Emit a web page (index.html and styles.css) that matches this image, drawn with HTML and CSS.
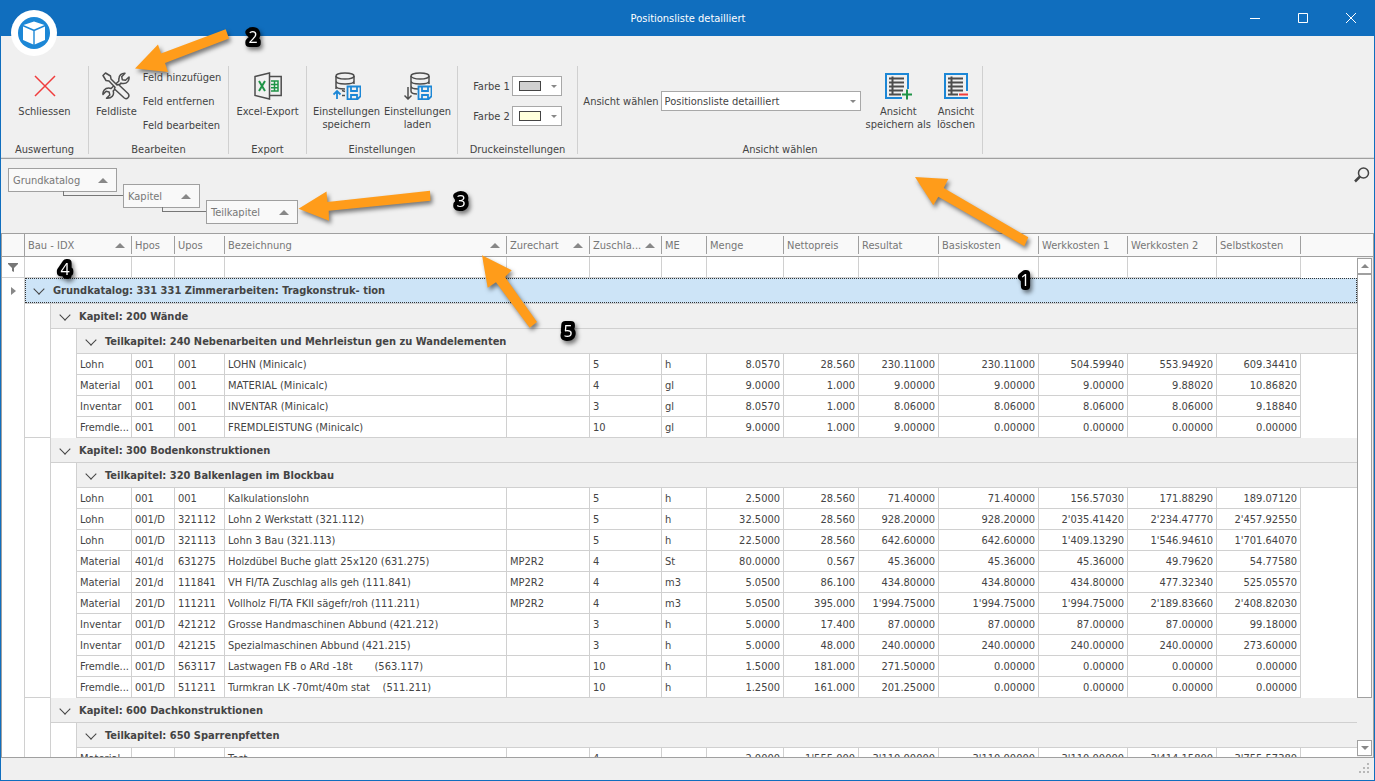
FILE: index.html
```html
<!DOCTYPE html>
<html lang="de">
<head>
    <meta charset="UTF-8">
    <meta name="viewport" content="width=device-width, initial-scale=1.0">
    <title>Positionsliste detailliert</title>
    <link rel="stylesheet" href="styles.css">
</head>
<body>
    <div class="window">
        <header class="titlebar">
            <svg class="app-logo" viewBox="0 0 46 46">
                <circle cx="23" cy="23" r="23" fill="#fff"/>
                <circle cx="23" cy="23" r="16" fill="#1c87d6"/>
                <path d="M23 11.5 33.5 15 23 19.500 12.500 15zM12 16.500 22.300 21v13.500L12 30zM34 16.500 23.700 21v13.500L34 30z" fill="#fff"/>
            </svg>
            <h1 class="title">Positionsliste detailliert</h1>
            <div class="window-buttons">
                <button aria-label="Minimieren"><svg width="12" height="12"><path d="M1 6.500h10"/></svg></button>
                <button aria-label="Maximieren"><svg width="12" height="12"><path d="M1.500 1.500h9v9h-9z"/></svg></button>
                <button aria-label="Fenster schliessen"><svg width="12" height="12"><path d="M1 1l10 10M11 1 1 11"/></svg></button>
            </div>
        </header>

        <div class="ribbon">
            <section class="group group-auswertung">
                <div class="tools">
                    <button class="tool">
                        <svg width="28" height="28"><path d="M4 4l20 20M24 4 4 24" stroke="#f03c3c" stroke-width="1.500"/></svg>
                        Schliessen
                    </button>
                </div>
                <div class="caption">Auswertung</div>
            </section>
            <div class="sep"></div>
            <section class="group group-bearbeiten">
                <div class="tools">
                    <button class="tool">
                        <svg width="28" height="28" stroke="#4d4d4d" stroke-width="1.500" stroke-linejoin="round">
                            <path d="M17 6.500c0-3 2.500-5.500 6-5.300l-3.300 3.500.6 3 3.200.6L27 5c.6 3.500-2 6.600-5.500 6.600-1 0-1.800-.1-2.500-.5L11.200 19c1.300 4-1.400 7.700-6.700 7.300l3.300-3.400-.7-3-3-.6L1 22.500c-.5-3.500 2-6.500 5.600-6.500 1 0 1.800.2 2.500.5L16.900 9c-.2-.8-.1-1.600.1-2.500z" fill="#f0f0f0"/>
                            <path d="M1 3.500 3.500 1l5 3 .5 3 6 6 1.500-.5 9.500 9c2.500 3-1.200 6.700-4 4.300L12.500 17l.5-1.800-6-6.200-3-.5z" fill="#f0f0f0"/>
                        </svg>
                        Feldliste
                    </button>
                    <div class="tool-list">
                        <button>Feld hinzufügen</button>
                        <button>Feld entfernen</button>
                        <button>Feld bearbeiten</button>
                    </div>
                </div>
                <div class="caption">Bearbeiten</div>
            </section>
            <div class="sep"></div>
            <section class="group group-export">
                <div class="tools">
                    <button class="tool">
                        <svg width="28" height="28" stroke="#4d4d4d" stroke-width="1.500">
                            <path d="M1 4.500 15.500 1v26L1 23.500z"/>
                            <path d="M15.500 4.500h11.700v19H15.500"/>
                            <path d="M5 9l6 10M11 9 5 19" stroke="#1f9447" stroke-width="2"/>
                            <path d="M17 9h7v10h-7M17 12.500h7M17 15.700h7M20.500 9v10" stroke="#1f9447"/>
                        </svg>
                        Excel-Export
                    </button>
                </div>
                <div class="caption">Export</div>
            </section>
            <div class="sep"></div>
            <section class="group group-einstellungen">
                <div class="tools">
                    <button class="tool">
                        <svg width="28" height="28" stroke="#4d4d4d" stroke-width="1.500">
                            <ellipse cx="12" cy="4" rx="9" ry="3"/>
                            <path d="M3 4v5c0 4 18 4 18 0V4M3 9v5c0 2 4 3 9 3M21 9v3M3 14v3M9 18.500l3 1M9 23.500h3"/>
                            <path d="M14.500 14.500h13v9.700l-3 3h-10zM18 14.500v4.500h6v-4.500M18 27v-4h6v4M4 27v-8M.5 22.500 4 19l3.500 3.500" stroke="#1c87d6" stroke-width="1.800"/>
                        </svg>
                        Einstellungen<br>speichern
                    </button>
                    <button class="tool">
                        <svg width="28" height="28" stroke="#4d4d4d" stroke-width="1.500">
                            <ellipse cx="16" cy="4" rx="9" ry="3"/>
                            <path d="M7 4v5c0 4 18 4 18 0V4M7 9v5c0 2 3 3 7 3M25 9v3M7 14v5c0 2 3 3 6 3"/>
                            <path d="M4 15v12M.5 23.500 4 27l3.500-3.500"/>
                            <path d="M14.500 14.500h13v9.700l-3 3h-10zM18 14.500v4.500h6v-4.500M18 27v-4h6v4" stroke="#1c87d6" stroke-width="1.800"/>
                        </svg>
                        Einstellungen<br>laden
                    </button>
                </div>
                <div class="caption">Einstellungen</div>
            </section>
            <div class="sep"></div>
            <section class="group group-druck">
                <div class="fields">
                    <div class="field">
                        <label for="farbe1">Farbe 1</label>
                        <div class="color-field">
                            <select id="farbe1"><option value="grau"></option></select>
                            <span class="swatch swatch-grey"></span>
                        </div>
                    </div>
                    <div class="field">
                        <label for="farbe2">Farbe 2</label>
                        <div class="color-field">
                            <select id="farbe2"><option value="gelb"></option></select>
                            <span class="swatch swatch-yellow"></span>
                        </div>
                    </div>
                </div>
                <div class="caption">Druckeinstellungen</div>
            </section>
            <div class="sep"></div>
            <section class="group group-ansicht">
                <div class="tools">
                    <div class="field">
                        <label for="ansicht">Ansicht wählen</label>
                        <select id="ansicht" class="view-select"><option>Positionsliste detailliert</option></select>
                    </div>
                    <button class="tool tool-save">
                        <svg width="28" height="28" stroke-width="1.500">
                            <path d="M24 17V2H2v24h16" stroke="#1c87d6" stroke-width="2"/>
                            <path d="M5 6.500h15M5 10.500h15M5 14.500h15M5 18.500h14M5 22.500h12M8.500 4.500v19" stroke="#4d4d4d" stroke-width="2"/>
                            <path d="M18 22.500h10M23 17.500v10" stroke="#1f9447" stroke-width="2"/>
                        </svg>
                        Ansicht<br>speichern als
                    </button>
                    <button class="tool">
                        <svg width="28" height="28">
                            <path d="M25 19V2H3v24h22v-1" stroke="#1c87d6" stroke-width="2"/>
                            <path d="M6 6.500h15M6 10.500h15M6 14.500h15M6 18.500h15M6 22.500h10M9.500 4.500v19" stroke="#4d4d4d" stroke-width="2"/>
                            <path d="M17 22.500h9" stroke="#f03c3c" stroke-width="2"/>
                        </svg>
                        Ansicht<br>löschen
                    </button>
                </div>
                <div class="caption">Ansicht wählen</div>
            </section>
            <div class="sep"></div>
        </div>

        <div class="group-panel">
            <button class="group-box box-grundkatalog">Grundkatalog<i class="sort"></i></button>
            <button class="group-box box-kapitel">Kapitel<i class="sort"></i></button>
            <button class="group-box box-teilkapitel">Teilkapitel<i class="sort"></i></button>
            <button class="search" aria-label="Suchen">
                <svg width="16" height="16"><circle cx="9.500" cy="6" r="5"/><path d="M6 9.500 1 14.500" stroke-width="2.500"/></svg>
            </button>
        </div>

        <main class="grid">
            <div class="grid-view">
                <table class="positions">
                    <colgroup>
                        <col class="w-marker"><col class="w-indent"><col class="w-indent"><col class="w-bau">
                        <col class="w-hpos"><col class="w-upos"><col class="w-text"><col class="w-zurechart">
                        <col class="w-zuschlag"><col class="w-me"><col class="w-menge"><col class="w-netto">
                        <col class="w-resultat"><col class="w-basis"><col class="w-werk"><col class="w-werk">
                        <col class="w-selbst"><col>
                    </colgroup>
                    <thead>
                        <tr>
                            <th class="first"></th>
                            <th colspan="3"><div>Bau - IDX<i class="sort"></i></div></th>
                            <th>Hpos</th>
                            <th>Upos</th>
                            <th><div>Bezeichnung<i class="sort"></i></div></th>
                            <th><div>Zurechart<i class="sort"></i></div></th>
                            <th><div>Zuschla...<i class="sort"></i></div></th>
                            <th>ME</th>
                            <th>Menge</th>
                            <th>Nettopreis</th>
                            <th>Resultat</th>
                            <th>Basiskosten</th>
                            <th>Werkkosten 1</th>
                            <th>Werkkosten 2</th>
                            <th>Selbstkosten</th>
                            <th class="rest"></th>
                        </tr>
                    </thead>
                    <tbody>
                        <tr class="filter">
                            <td class="marker"><svg width="10" height="9"><path d="M0 0h10v1L6 5v4L4 8V5L0 1z" fill="#777"/></svg></td>
                            <td colspan="3"><input aria-label="Filter Bau - IDX"></td>
                            <td><input aria-label="Filter Hpos"></td>
                            <td><input aria-label="Filter Upos"></td>
                            <td><input aria-label="Filter Bezeichnung"></td>
                            <td><input aria-label="Filter Zurechart"></td>
                            <td><input aria-label="Filter Zuschlag"></td>
                            <td><input aria-label="Filter ME"></td>
                            <td><input aria-label="Filter Menge"></td>
                            <td><input aria-label="Filter Nettopreis"></td>
                            <td><input aria-label="Filter Resultat"></td>
                            <td><input aria-label="Filter Basiskosten"></td>
                            <td><input aria-label="Filter Werkkosten 1"></td>
                            <td><input aria-label="Filter Werkkosten 2"></td>
                            <td><input aria-label="Filter Selbstkosten"></td>
                            <td class="rest"></td>
                        </tr>
                        <tr class="focused">
                            <td class="marker"><svg width="5" height="8"><path d="M0 0l5 4-5 4z" fill="#888"/></svg></td>
                            <td class="heading" colspan="17"><div><button class="toggle" aria-label="Zuklappen"></button>Grundkatalog: 331 331 Zimmerarbeiten: Tragkonstruk- tion</div></td>
                        </tr>
                        <tr>
                            <td class="marker"></td><td class="indent"></td>
                            <td class="heading" colspan="16"><div><button class="toggle" aria-label="Zuklappen"></button>Kapitel: 200 Wände</div></td>
                        </tr>
                        <tr>
                            <td class="marker"></td><td class="indent"></td><td class="indent"></td>
                            <td class="heading" colspan="15"><div><button class="toggle" aria-label="Zuklappen"></button>Teilkapitel: 240 Nebenarbeiten und Mehrleistun gen zu Wandelementen</div></td>
                        </tr>
                        <tr class="item"><td class="marker"></td><td class="indent"></td><td class="indent"></td><td>Lohn</td><td>001</td><td>001</td><td>LOHN (Minicalc)</td><td></td><td>5</td><td>h</td><td class="num">8.0570</td><td class="num">28.560</td><td class="num">230.11000</td><td class="num">230.11000</td><td class="num">504.59940</td><td class="num">553.94920</td><td class="num">609.34410</td><td class="rest"></td></tr>
                        <tr class="item"><td class="marker"></td><td class="indent"></td><td class="indent"></td><td>Material</td><td>001</td><td>001</td><td>MATERIAL (Minicalc)</td><td></td><td>4</td><td>gl</td><td class="num">9.0000</td><td class="num">1.000</td><td class="num">9.00000</td><td class="num">9.00000</td><td class="num">9.00000</td><td class="num">9.88020</td><td class="num">10.86820</td><td class="rest"></td></tr>
                        <tr class="item"><td class="marker"></td><td class="indent"></td><td class="indent"></td><td>Inventar</td><td>001</td><td>001</td><td>INVENTAR (Minicalc)</td><td></td><td>3</td><td>gl</td><td class="num">8.0570</td><td class="num">1.000</td><td class="num">8.06000</td><td class="num">8.06000</td><td class="num">8.06000</td><td class="num">8.06000</td><td class="num">9.18840</td><td class="rest"></td></tr>
                        <tr class="item last"><td class="marker"></td><td class="indent"></td><td class="indent"></td><td>Fremdle...</td><td>001</td><td>001</td><td>FREMDLEISTUNG (Minicalc)</td><td></td><td>10</td><td>gl</td><td class="num">9.0000</td><td class="num">1.000</td><td class="num">9.00000</td><td class="num">0.00000</td><td class="num">0.00000</td><td class="num">0.00000</td><td class="num">0.00000</td><td class="rest"></td></tr>
                        <tr>
                            <td class="marker"></td><td class="indent"></td>
                            <td class="heading" colspan="16"><div><button class="toggle" aria-label="Zuklappen"></button>Kapitel: 300 Bodenkonstruktionen</div></td>
                        </tr>
                        <tr>
                            <td class="marker"></td><td class="indent"></td><td class="indent"></td>
                            <td class="heading" colspan="15"><div><button class="toggle" aria-label="Zuklappen"></button>Teilkapitel: 320 Balkenlagen im Blockbau</div></td>
                        </tr>
                        <tr class="item"><td class="marker"></td><td class="indent"></td><td class="indent"></td><td>Lohn</td><td>001</td><td>001</td><td>Kalkulationslohn</td><td></td><td>5</td><td>h</td><td class="num">2.5000</td><td class="num">28.560</td><td class="num">71.40000</td><td class="num">71.40000</td><td class="num">156.57030</td><td class="num">171.88290</td><td class="num">189.07120</td><td class="rest"></td></tr>
                        <tr class="item"><td class="marker"></td><td class="indent"></td><td class="indent"></td><td>Lohn</td><td>001/D</td><td>321112</td><td>Lohn 2 Werkstatt (321.112)</td><td></td><td>5</td><td>h</td><td class="num">32.5000</td><td class="num">28.560</td><td class="num">928.20000</td><td class="num">928.20000</td><td class="num">2'035.41420</td><td class="num">2'234.47770</td><td class="num">2'457.92550</td><td class="rest"></td></tr>
                        <tr class="item"><td class="marker"></td><td class="indent"></td><td class="indent"></td><td>Lohn</td><td>001/D</td><td>321113</td><td>Lohn 3 Bau (321.113)</td><td></td><td>5</td><td>h</td><td class="num">22.5000</td><td class="num">28.560</td><td class="num">642.60000</td><td class="num">642.60000</td><td class="num">1'409.13290</td><td class="num">1'546.94610</td><td class="num">1'701.64070</td><td class="rest"></td></tr>
                        <tr class="item"><td class="marker"></td><td class="indent"></td><td class="indent"></td><td>Material</td><td>401/d</td><td>631275</td><td>Holzdübel Buche glatt 25x120 (631.275)</td><td>MP2R2</td><td>4</td><td>St</td><td class="num">80.0000</td><td class="num">0.567</td><td class="num">45.36000</td><td class="num">45.36000</td><td class="num">45.36000</td><td class="num">49.79620</td><td class="num">54.77580</td><td class="rest"></td></tr>
                        <tr class="item"><td class="marker"></td><td class="indent"></td><td class="indent"></td><td>Material</td><td>201/d</td><td>111841</td><td>VH FI/TA Zuschlag alls geh (111.841)</td><td>MP2R2</td><td>4</td><td>m3</td><td class="num">5.0500</td><td class="num">86.100</td><td class="num">434.80000</td><td class="num">434.80000</td><td class="num">434.80000</td><td class="num">477.32340</td><td class="num">525.05570</td><td class="rest"></td></tr>
                        <tr class="item"><td class="marker"></td><td class="indent"></td><td class="indent"></td><td>Material</td><td>201/D</td><td>111211</td><td>Vollholz FI/TA FKII sägefr/roh (111.211)</td><td>MP2R2</td><td>4</td><td>m3</td><td class="num">5.0500</td><td class="num">395.000</td><td class="num">1'994.75000</td><td class="num">1'994.75000</td><td class="num">1'994.75000</td><td class="num">2'189.83660</td><td class="num">2'408.82030</td><td class="rest"></td></tr>
                        <tr class="item"><td class="marker"></td><td class="indent"></td><td class="indent"></td><td>Inventar</td><td>001/D</td><td>421212</td><td>Grosse Handmaschinen Abbund (421.212)</td><td></td><td>3</td><td>h</td><td class="num">5.0000</td><td class="num">17.400</td><td class="num">87.00000</td><td class="num">87.00000</td><td class="num">87.00000</td><td class="num">87.00000</td><td class="num">99.18000</td><td class="rest"></td></tr>
                        <tr class="item"><td class="marker"></td><td class="indent"></td><td class="indent"></td><td>Inventar</td><td>001/D</td><td>421215</td><td>Spezialmaschinen Abbund (421.215)</td><td></td><td>3</td><td>h</td><td class="num">5.0000</td><td class="num">48.000</td><td class="num">240.00000</td><td class="num">240.00000</td><td class="num">240.00000</td><td class="num">240.00000</td><td class="num">273.60000</td><td class="rest"></td></tr>
                        <tr class="item"><td class="marker"></td><td class="indent"></td><td class="indent"></td><td>Fremdle...</td><td>001/D</td><td>563117</td><td>Lastwagen FB o ARd -18t       (563.117)</td><td></td><td>10</td><td>h</td><td class="num">1.5000</td><td class="num">181.000</td><td class="num">271.50000</td><td class="num">0.00000</td><td class="num">0.00000</td><td class="num">0.00000</td><td class="num">0.00000</td><td class="rest"></td></tr>
                        <tr class="item last"><td class="marker"></td><td class="indent"></td><td class="indent"></td><td>Fremdle...</td><td>001/D</td><td>511211</td><td>Turmkran LK -70mt/40m stat    (511.211)</td><td></td><td>10</td><td>h</td><td class="num">1.2500</td><td class="num">161.000</td><td class="num">201.25000</td><td class="num">0.00000</td><td class="num">0.00000</td><td class="num">0.00000</td><td class="num">0.00000</td><td class="rest"></td></tr>
                        <tr>
                            <td class="marker"></td><td class="indent"></td>
                            <td class="heading" colspan="16"><div><button class="toggle" aria-label="Zuklappen"></button>Kapitel: 600 Dachkonstruktionen</div></td>
                        </tr>
                        <tr>
                            <td class="marker"></td><td class="indent"></td><td class="indent"></td>
                            <td class="heading" colspan="15"><div><button class="toggle" aria-label="Zuklappen"></button>Teilkapitel: 650 Sparrenpfetten</div></td>
                        </tr>
                        <tr class="item"><td class="marker"></td><td class="indent"></td><td class="indent"></td><td>Material</td><td></td><td></td><td>Test</td><td></td><td>4</td><td></td><td class="num">2.0000</td><td class="num">1'555.000</td><td class="num">3'110.00000</td><td class="num">3'110.00000</td><td class="num">3'110.00000</td><td class="num">3'414.15800</td><td class="num">3'755.57380</td><td class="rest"></td></tr>
                    </tbody>
                </table>
            </div>
            <div class="scrollbar">
                <div class="scroll-corner"></div>
                <button class="scroll-button" aria-label="Nach oben"><i class="arrow-up"></i></button>
                <div class="thumb"></div>
                <div class="track"></div>
                <button class="scroll-button" aria-label="Nach unten"><i class="arrow-down"></i></button>
            </div>
        </main>

        <footer class="statusbar">
            <svg width="12" height="12"><path d="M9 0h2v2H9zM5 4h2v2H5zM9 4h2v2H9zM1 8h2v2H1zM5 8h2v2H5zM9 8h2v2H9z" fill="#b8b8b8"/></svg>
        </footer>

        <!-- numbered callouts -->
        <svg class="callouts" width="1375" height="781">
            <g class="arrows">
                <path d="M135 68.500 158 44.500 161 53.500 225.700 29.300 229 38.500 165 63 168 72z"/>
                <path d="M298.500 208.700 326.500 191.500 327.500 202 430 190.700 430.500 200.700 328.700 210.700 329 220.700z"/>
                <path d="M482 255.300 511.700 270.300 505 277 537 322 529.700 327.700 496 282.300 487.700 287.700z"/>
                <path d="M915 177 948.300 179 943.700 188 1028.300 237.300 1024.300 246.300 938.300 196.700 933.300 205.300z"/>
            </g>
            <g class="numbers">
                <text x="1025" y="286">1</text>
                <text x="253" y="43">2</text>
                <text x="461" y="207">3</text>
                <text x="65" y="275">4</text>
                <text x="568" y="337">5</text>
            </g>
        </svg>
    </div>
</body>
</html>
```
FILE: styles.css
```css
* {
    box-sizing: border-box;
}
body {
    margin: 0;
    font-family: "DejaVu Sans Condensed", "Noto Sans", sans-serif;
    font-size: 11px;
    line-height: 13px;
    color: #444;
}
button, input, select {
    font: inherit;
    color: inherit;
    margin: 0;
    padding: 0;
    border: none;
    border-radius: 0;
    background: none;
}
svg {
    display: block;
    fill: none;
}
.window {
    position: relative;
    display: flex;
    flex-direction: column;
    height: 100vh;
    overflow: hidden;
    background: #f0f0f0;
    border: 1px solid #106ebe;
    border-top: none;
}

/* title bar */
.titlebar {
    display: grid;
    grid-template-columns: 1fr auto 1fr;
    align-items: center;
    height: 36px;
    flex: none;
    margin-right: -1px;
    background: #106ebe;
    color: #fff;
}
.app-logo {
    position: absolute;
    left: 10px;
    top: 10px;
    width: 46px;
    height: 46px;
}
.title {
    grid-column: 2;
    margin: 0;
    font-size: 11px;
    font-weight: 400;
}
.window-buttons {
    display: flex;
    justify-content: flex-end;
}
.window-buttons button {
    display: flex;
    align-items: center;
    justify-content: center;
    width: 48px;
    height: 36px;
}
.window-buttons svg {
    stroke: #fff;
}

/* ribbon */
.ribbon {
    display: flex;
    flex: none;
    height: 123px;
    padding-top: 30px;
    border-bottom: 1px solid #a0a0a0;
    box-shadow: inset 0 -1px #dcdcdc;
}
.sep {
    flex: none;
    width: 1px;
    height: 88px;
    background: #d0d0d0;
}
.group {
    display: flex;
    flex-direction: column;
    flex: none;
    height: 90px;
}
.group-auswertung { width: 87px; }
.group-bearbeiten { width: 139px; }
.group-export { width: 77px; }
.group-einstellungen { width: 150px; }
.group-druck { width: 119px; }
.group-ansicht { width: 404px; }
.tools {
    display: flex;
    flex: 1;
    justify-content: center;
}
.group-bearbeiten .tools {
    justify-content: flex-start;
    padding-left: 4px;
}
.group-ansicht .tools {
    justify-content: flex-end;
    padding-right: 4px;
}
.caption {
    text-align: center;
}
.tool {
    display: flex;
    flex-direction: column;
    align-items: center;
    justify-content: flex-start;
    padding: 6px 3px 0;
    text-align: center;
    white-space: nowrap;
}
.tool svg {
    margin-bottom: 5px;
}
.group-einstellungen .tool {
    width: 71px;
    padding-left: 0;
    padding-right: 0;
}
.tool-list {
    display: flex;
    flex-direction: column;
    align-items: flex-start;
    padding-left: 3px;
}
.tool-list button {
    height: 24px;
    padding-bottom: 2px;
    white-space: nowrap;
}
.fields {
    display: flex;
    flex-direction: column;
    flex: 1;
    align-items: center;
    gap: 10px;
    padding-top: 10px;
}
.field {
    position: relative;
    display: flex;
    align-items: center;
    gap: 2px;
    white-space: nowrap;
}
.group-ansicht .field {
    height: 70px;
}
.field select {
    appearance: none;
    display: block;
    width: 50px;
    height: 20px;
    padding: 0 3px;
    border: 1px solid #a8a8a8;
    background: #fff;
}
.field .view-select {
    width: 200px;
}
.color-field {
    position: relative;
}
.color-field::after, .group-ansicht .field::after {
    content: "";
    position: absolute;
    right: 5px;
    top: calc(50% - 1px);
    border: 3px solid transparent;
    border-top-color: #888;
    border-bottom: none;
    pointer-events: none;
}
.swatch {
    position: absolute;
    left: 7px;
    top: 5px;
    width: 22px;
    height: 10px;
    border: 1px solid #444;
    pointer-events: none;
}
.swatch-grey { background: #d0d0d0; }
.swatch-yellow { background: #ffffdc; }
.tool-save {
    margin-left: 2px;
}

/* group panel */
.group-panel {
    display: flex;
    align-items: flex-start;
    gap: 6px;
    flex: none;
    height: 74px;
    padding: 8px 4px 0 7px;
}
.group-box {
    position: relative;
    display: flex;
    align-items: center;
    justify-content: space-between;
    height: 24px;
    padding: 0 8px 0 4px;
    border: 1px solid #a0a0a0;
    background: #f9f9f9;
    color: #777;
}
.box-grundkatalog {
    width: 109px;
    margin-top: 1px;
}
.box-kapitel {
    width: 77px;
    margin-top: 17px;
}
.box-teilkapitel {
    width: 92px;
    margin-top: 33px;
}
.box-grundkatalog::after, .box-kapitel::after {
    content: "";
    position: absolute;
    left: 50%;
    right: -7px;
    top: 100%;
    height: 4px;
    border: solid #777;
    border-width: 0 0 1px 1px;
}
.sort {
    flex: none;
    border: 5px solid transparent;
    border-bottom-color: #888;
    border-top: none;
}
.search {
    margin-left: auto;
}
.search svg {
    stroke: #444;
    stroke-width: 1.5px;
}

/* grid */
.grid {
    display: flex;
    flex: 1;
    min-height: 0;
    border: 1px solid #a0a0a0;
}
.grid-view {
    flex: 1;
    min-width: 0;
    overflow: hidden;
    background: #fff;
}
.positions {
    width: 100%;
    table-layout: fixed;
    border-collapse: separate;
    border-spacing: 0;
}
.w-marker { width: 23px; }
.w-indent { width: 26px; }
.w-bau { width: 55px; }
.w-hpos { width: 43px; }
.w-upos { width: 50px; }
.w-text { width: 282px; }
.w-zurechart { width: 83px; }
.w-zuschlag { width: 72px; }
.w-me { width: 45px; }
.w-menge { width: 77px; }
.w-netto { width: 75px; }
.w-resultat { width: 80px; }
.w-basis { width: 100px; }
.w-werk { width: 89px; }
.w-selbst { width: 84px; }
th {
    height: 23px;
    padding: 0 7px 0 3px;
    border-bottom: 1px solid #a0a0a0;
    background: linear-gradient(#a0a0a0, #a0a0a0) right center / 1px 18px no-repeat #f9f9f9;
    color: #777;
    font-weight: 400;
    text-align: left;
    white-space: nowrap;
}
th.first {
    background: #f9f9f9;
    border-right: 1px solid #a0a0a0;
}
th.rest {
    background: #f9f9f9;
}
th div {
    display: flex;
    align-items: center;
    justify-content: space-between;
}
td {
    height: 21px;
    padding: 0 3px;
    border-right: 1px solid #d0d0d0;
    border-bottom: 1px solid #d0d0d0;
    white-space: pre;
    overflow: hidden;
}
td.rest {
    border: none;
}
td.num {
    text-align: right;
}
td.marker, td.indent {
    padding: 0;
    border-bottom: none;
}
td.marker svg {
    margin: 0 auto;
}
.filter td.marker, .last td.marker + .indent {
    border-bottom: 1px solid #d0d0d0;
}
.filter input {
    display: block;
    width: 100%;
    height: 20px;
}
td.heading {
    height: 25px;
    padding: 0;
    border-right: none;
    background: #f0f0f0;
    font-weight: 700;
}
.heading div {
    display: flex;
    align-items: center;
    height: 24px;
    padding-left: 9px;
}
.focused td.heading {
    height: 26px;
    background: #cde4f7;
}
.focused .heading div {
    height: 25px;
    padding-left: 8px;
    border: 1px dotted #333;
}
.toggle {
    display: flex;
    justify-content: center;
    width: 10px;
    height: 11px;
    margin-right: 9px;
}
.toggle::before {
    content: "";
    width: 7px;
    height: 7px;
    border: solid #444;
    border-width: 0 1px 1px 0;
    transform: rotate(45deg);
}

/* scroll bar */
.scrollbar {
    display: flex;
    flex-direction: column;
    width: 16px;
    padding-bottom: 1px;
}
.scroll-corner {
    height: 23px;
    margin-bottom: 1px;
    border-bottom: 1px solid #a0a0a0;
    background: #f9f9f9;
}
.scroll-button {
    display: flex;
    align-items: center;
    justify-content: center;
    width: 15px;
    height: 16px;
    border: 1px solid #a0a0a0;
    background: #fff;
}
.arrow-up, .arrow-down {
    border: 4px solid transparent;
}
.arrow-up {
    border-bottom-color: #888;
    border-top: none;
}
.arrow-down {
    border-top-color: #888;
    border-bottom: none;
}
.thumb {
    flex: 10;
    width: 15px;
    border: 1px solid #a0a0a0;
    background: #fff;
}
.track {
    flex: 1;
}

.statusbar {
    display: flex;
    justify-content: flex-end;
    align-items: center;
    flex: none;
    height: 22px;
    padding-right: 4px;
}

/* callouts lie over the whole window */
.callouts {
    position: absolute;
    left: -1px;
    top: 0;
    pointer-events: none;
    filter: drop-shadow(2px 3px 2px rgba(0, 0, 0, 0.5));
}
.arrows {
    fill: #ff9c1a;
}
.numbers {
    fill: #fff;
    stroke: #000;
    stroke-width: 8px;
    stroke-linejoin: round;
    paint-order: stroke;
    font-family: "Open Sans", sans-serif;
    font-size: 16px;
    text-anchor: middle;
}
```
